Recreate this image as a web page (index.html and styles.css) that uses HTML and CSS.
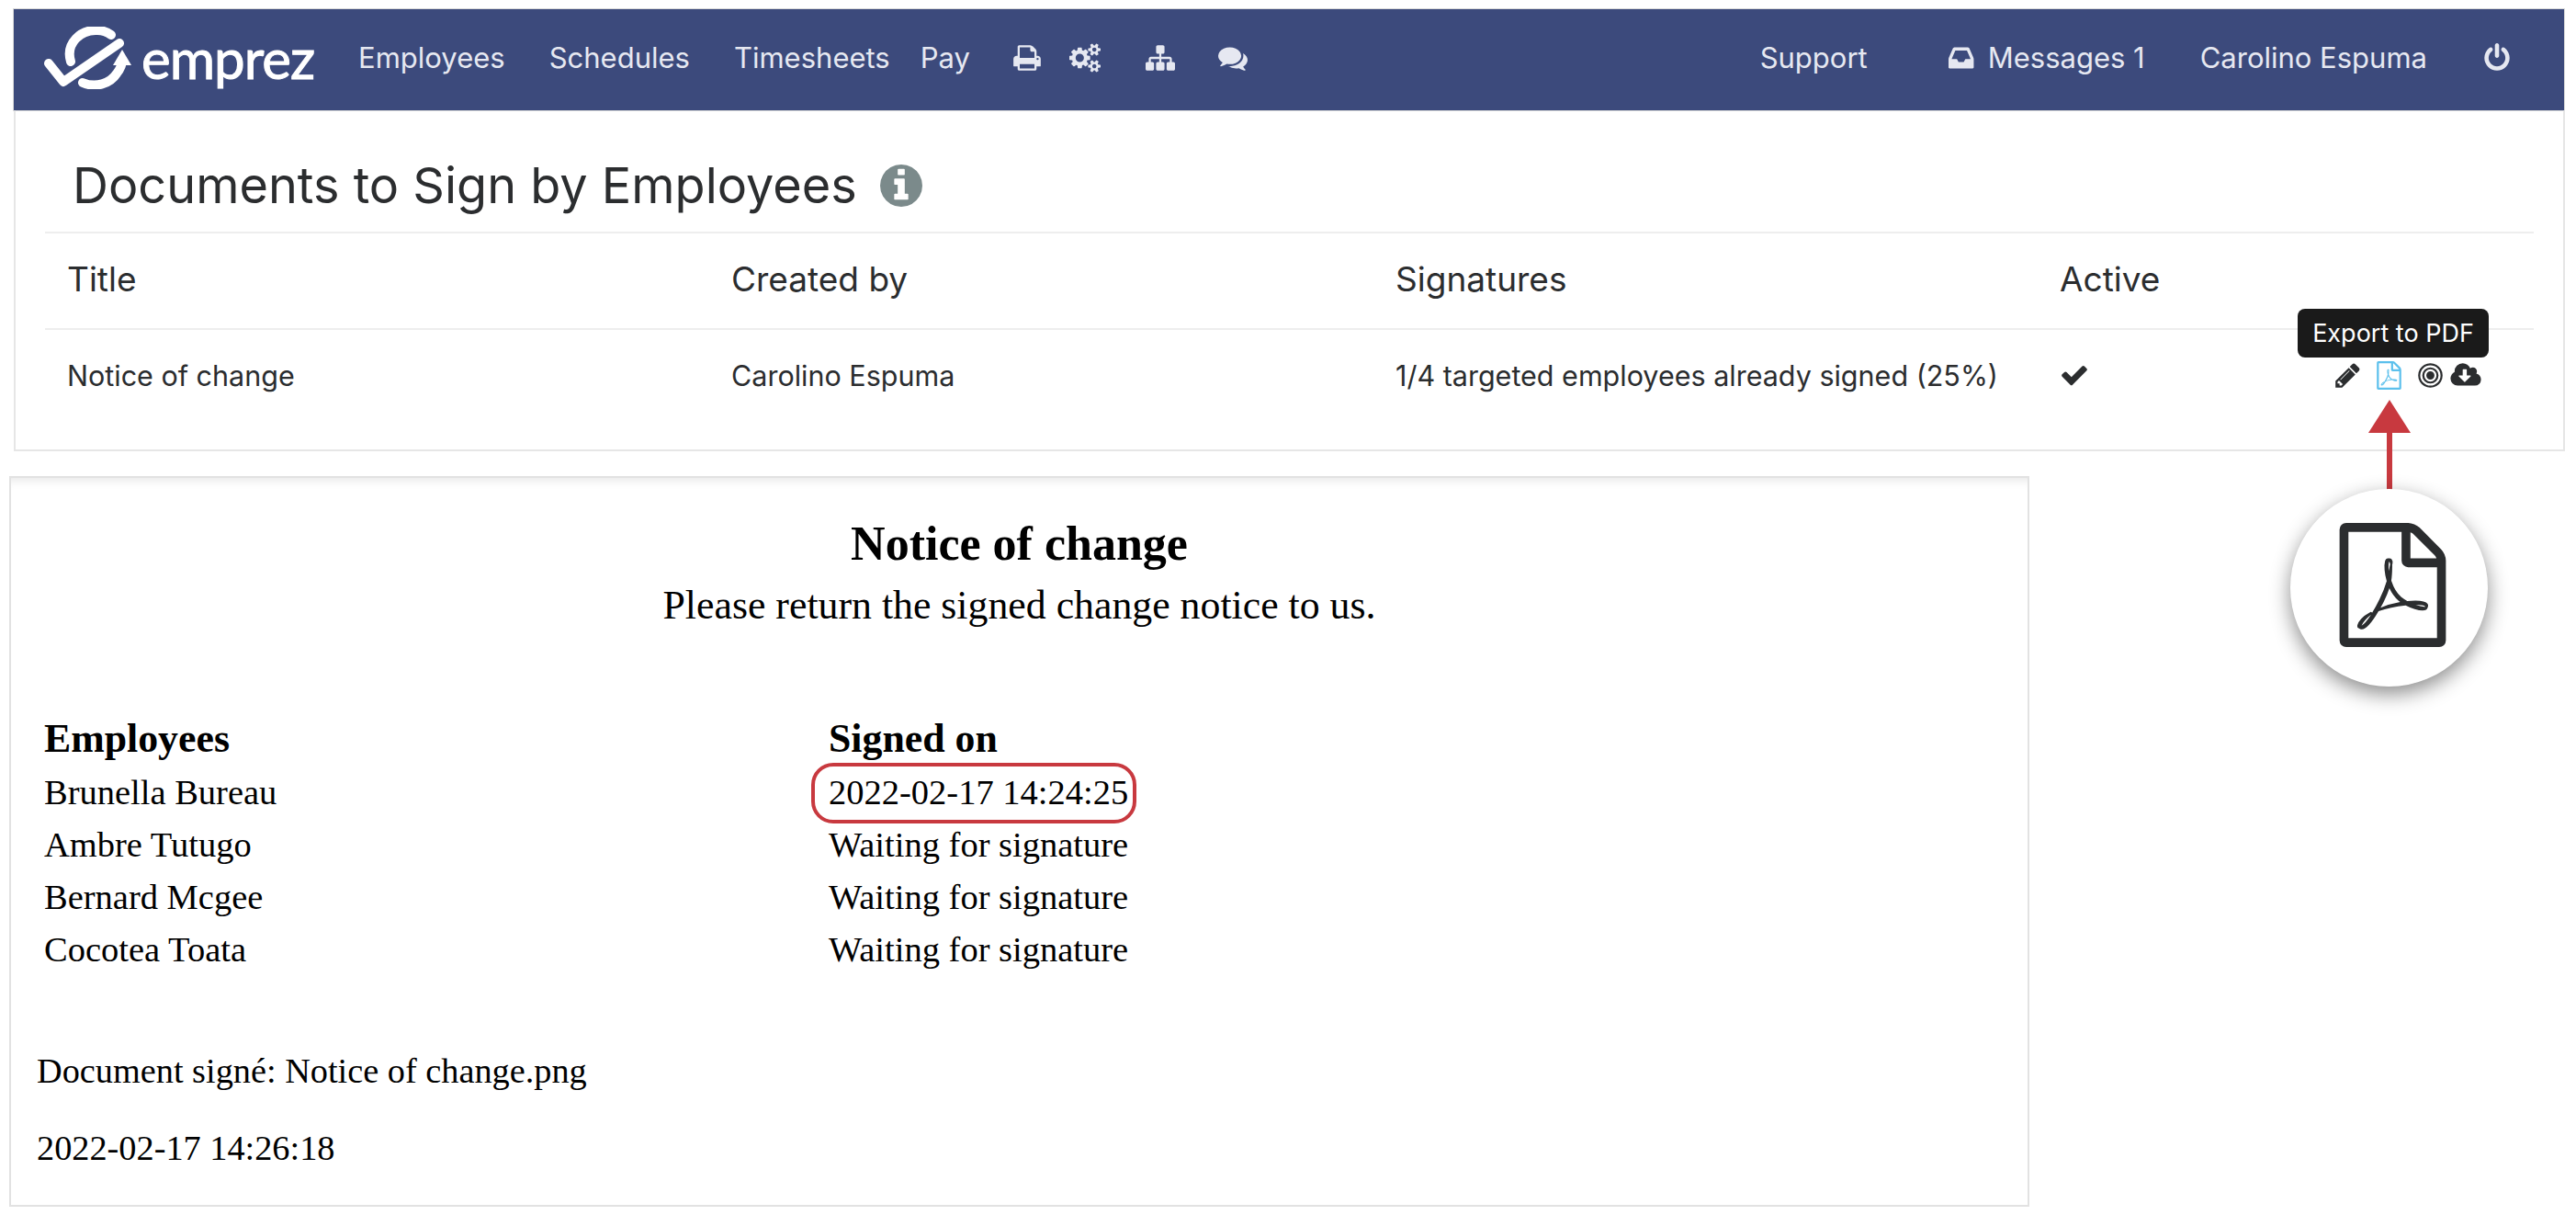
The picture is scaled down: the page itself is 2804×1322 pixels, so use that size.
FILE: index.html
```html
<!DOCTYPE html>
<html>
<head>
  <title>Documents to Sign by Employees</title>
  <meta charset="UTF-8">
  <link rel="stylesheet" href="styles.css">
</head>
<body>
  <div class="page">
    <nav class="navbar">
      <a class="brand">
        <svg class="brand-mark" viewBox="0 0 95 68">
          <path class="mark-line" d="M5 40 L21 60 L82 18"/>
          <path class="mark-line" d="M29 38 C23 18 40 3 58 4 C64 4 69 6 73 9"/>
          <path class="mark-line" d="M42 61 C56 67 72 62 79 51 C83 46 85 42 85 36"/>
          <path class="mark-head" d="M85 25 L95 42 L75 42 Z"/>
        </svg>
        <span class="brand-name">emprez</span>
      </a>
      <ul class="nav-list">
        <li>Employees</li>
        <li>Schedules</li>
        <li>Timesheets</li>
        <li class="nav-pay">Pay</li>
        <li class="nav-print">
          <svg class="icon" viewBox="0 0 1792 1792"><path d="M448 1536h896v-256h-896v256zm0-640h896v-384h-160q-40 0-68-28t-28-68v-160h-640v640zm1152 64q0-26-19-45t-45-19-45 19-19 45 19 45 45 19 45-19 19-45zm128 0v416q0 13-9.5 22.5t-22.5 9.5h-224v160q0 40-28 68t-68 28h-960q-40 0-68-28t-28-68v-160h-224q-13 0-22.5-9.5t-9.5-22.5v-416q0-79 56.5-135.5t135.5-56.5h64v-544q0-40 28-68t68-28h672q40 0 88 20t76 48l152 152q28 28 48 76t20 88v256h64q79 0 135.5 56.5t56.5 135.5z"/></svg>
        </li>
        <li class="nav-cogs">
          <svg class="icon icon-wide" viewBox="0 0 1920 1792"><path d="M896 896q0-106-75-181t-181-75-181 75-75 181 75 181 181 75 181-75 75-181zm768 512q0-52-38-90t-90-38-90 38-38 90q0 53 37.5 90.5t90.5 37.5 90.5-37.5 37.5-90.5zm0-1024q0-52-38-90t-90-38-90 38-38 90q0 53 37.5 90.5t90.5 37.5 90.5-37.5 37.5-90.5zm-384 421v185q0 10-7 19.5t-16 10.5l-155 24q-11 35-32 76 34 48 90 115 7 11 7 20 0 12-7 19-23 30-82.5 89.5t-78.5 59.5q-11 0-21-7l-115-90q-37 19-77 31-11 108-23 155-7 24-30 24h-186q-11 0-20-7.5t-10-17.5l-23-153q-34-10-75-31l-118 89q-7 7-20 7-11 0-21-8-144-133-144-160 0-9 7-19 10-14 41-53t47-61q-23-44-35-82l-152-24q-10-1-17-9.5t-7-19.5v-185q0-10 7-19.5t16-10.5l155-24q11-35 32-76-34-48-90-115-7-11-7-20 0-12 7-20 22-30 82-89t79-59q11 0 21 7l115 90q34-18 77-32 11-108 23-154 7-24 30-24h186q11 0 20 7.5t10 17.5l23 153q34 10 75 31l118-89q8-7 20-7 11 0 21 8 144 133 144 160 0 8-7 19-12 16-42 54t-45 60q23 48 34 82l152 23q10 2 17 10.5t7 19.5zm640 533v140q0 16-149 31-12 27-30 52 51 113 51 138 0 4-4 7-122 71-124 71-8 0-46-47t-52-68q-20 2-30 2t-30-2q-14 21-52 68t-46 47q-2 0-124-71-4-3-4-7 0-25 51-138-18-25-30-52-149-15-149-31v-140q0-16 149-31 13-29 30-52-51-113-51-138 0-4 4-7 4-2 35-20t59-34 30-16q8 0 46 46.5t52 67.5q20-2 30-2t30 2q51-71 92-112l6-2q4 0 124 70 4 3 4 7 0 25-51 138 17 23 30 52 149 15 149 31zm0-1024v140q0 16-149 31-12 27-30 52 51 113 51 138 0 4-4 7-122 71-124 71-8 0-46-47t-52-68q-20 2-30 2t-30-2q-14 21-52 68t-46 47q-2 0-124-71-4-3-4-7 0-25 51-138-18-25-30-52-149-15-149-31v-140q0-16 149-31 13-29 30-52-51-113-51-138 0-4 4-7 4-2 35-20t59-34 30-16q8 0 46 46.5t52 67.5q20-2 30-2t30 2q51-71 92-112l6-2q4 0 124 70 4 3 4 7 0 25-51 138 17 23 30 52 149 15 149 31z"/></svg>
        </li>
        <li class="nav-sitemap">
          <svg class="icon" viewBox="0 0 1792 1792"><path d="M1792 1248v320q0 40-28 68t-68 28h-320q-40 0-68-28t-28-68v-320q0-40 28-68t68-28h96v-192h-512v192h96q40 0 68 28t28 68v320q0 40-28 68t-68 28h-320q-40 0-68-28t-28-68v-320q0-40 28-68t68-28h96v-192h-512v192h96q40 0 68 28t28 68v320q0 40-28 68t-68 28h-320q-40 0-68-28t-28-68v-320q0-40 28-68t68-28h96v-192q0-52 38-90t90-38h512v-192h-96q-40 0-68-28t-28-68v-320q0-40 28-68t68-28h320q40 0 68 28t28 68v320q0 40-28 68t-68 28h-96v192h512q52 0 90 38t38 90v192h96q40 0 68 28t28 68z"/></svg>
        </li>
        <li class="nav-comments">
          <svg class="icon" viewBox="0 0 1792 1792"><path d="M1408 768q0 139-94 257t-256.5 186.5-353.5 68.5q-86 0-176-16-124 88-278 128-36 9-86 16h-3q-11 0-20.5-8t-11.5-21q-1-3-1-6.5t.5-6.5 2-6l2.5-5 3.5-5.5 4-5 4.5-5 4-4.5q5-6 23-25t26-29.5 22.5-29 25-38.5 20.5-44q-124-72-195-177t-71-224q0-139 94-257t256.5-186.5 353.5-68.5 353.5 68.5 256.5 186.5 94 257zm384 256q0 120-71 224.5t-195 176.5q10 24 20.5 44t25 38.5 22.5 29 26 29.5 23 25q1 1 4 4.5t4.5 5 4 5 3.5 5.5l2.5 5 2 6 .5 6.5-1 6.5q-3 14-13 22t-22 7q-50-7-86-16-154-40-278-128-90 16-176 16-271 0-472-132 58 4 88 4 161 0 309-45t264-129q125-92 192-212t67-254q0-77-23-152 129 71 204 178t75 230z"/></svg>
        </li>
      </ul>
      <ul class="nav-list nav-right">
        <li>Support</li>
        <li class="nav-messages">
          <svg class="icon" viewBox="0 0 1792 1792"><path d="M1023 960h316q-1-3-2.5-8.5t-2.5-7.5l-212-496h-708l-212 496q-1 3-2.5 8.5t-2.5 7.5h316l95 192h320zm513 30v482q0 26-19 45t-45 19h-1408q-26 0-45-19t-19-45v-482q0-62 25-123l238-552q10-25 36.5-42t52.5-17h832q26 0 52.5 17t36.5 42l238 552q25 61 25 123z"/></svg>
          Messages 1
        </li>
        <li class="nav-user">Carolino Espuma</li>
        <li class="nav-power">
          <svg class="icon" viewBox="0 0 1792 1792"><path d="M1664 896q0 156-61 298t-164 245-245 164-298 61-298-61-245-164-164-245-61-298q0-182 80.5-343t226.5-270q43-32 95.5-25t83.5 50q32 42 24.5 94.5t-49.5 84.5q-98 74-151.5 181t-53.5 228q0 104 40.5 198.5t109.5 163.5 163.5 109.5 198.5 40.5 198.5-40.5 163.5-109.5 109.5-163.5 40.5-198.5q0-121-53.5-228t-151.5-181q-42-32-49.5-84.5t24.5-94.5q31-43 84-50t95 25q146 109 226.5 270t80.5 343zm-640-768v640q0 52-38 90t-90 38-90-38-38-90v-640q0-52 38-90t90-38 90 38 38 90z"/></svg>
        </li>
      </ul>
    </nav>

    <section class="panel">
      <h1 class="panel-title">
        Documents to Sign by Employees
        <svg class="info-icon" viewBox="128 128 1536 1536"><path d="M1152 1376v-160q0-14-9-23t-23-9h-96v-512q0-14-9-23t-23-9h-320q-14 0-23 9t-9 23v160q0 14 9 23t23 9h96v320h-96q-14 0-23 9t-9 23v160q0 14 9 23t23 9h448q14 0 23-9t9-23zm-128-896v-160q0-14-9-23t-23-9h-192q-14 0-23 9t-9 23v160q0 14 9 23t23 9h192q14 0 23-9t9-23zm640 416q0 209-103 385.5t-279.5 279.5-385.5 103-385.5-103-279.5-279.5-103-385.5 103-385.5 279.5-279.5 385.5-103 385.5 103 279.5 279.5 103 385.5z"/></svg>
      </h1>
      <div class="doc-table">
        <div class="doc-row doc-head">
          <div>Title</div>
          <div>Created by</div>
          <div>Signatures</div>
          <div>Active</div>
        </div>
        <div class="doc-row">
          <div>Notice of change</div>
          <div>Carolino Espuma</div>
          <div>1/4 targeted employees already signed (25%)</div>
          <div class="doc-active">
            <svg class="check-icon" viewBox="0 0 1792 1792"><path d="M1671 566q0 40-28 68l-724 724-136 136q-28 28-68 28t-68-28l-136-136-362-362q-28-28-28-68t28-68l136-136q28-28 68-28t68 28l294 295 656-657q28-28 68-28t68 28l136 136q28 28 28 68z"/></svg>
            <div class="actions">
              <svg class="action-icon" viewBox="0 0 1792 1792"><path d="M491 1536l91-91-235-235-91 91v107h128v128h107zm523-928q0-22-22-22-10 0-17 7l-542 542q-7 7-7 17 0 22 22 22 10 0 17-7l542-542q7-7 7-17zm-54-192l416 416-832 832h-416v-416zm683 96q0 53-37 90l-166 166-416-416 166-165q36-38 90-38 53 0 91 38l235 234q37 39 37 91z"/></svg>
              <svg class="action-icon action-pdf" viewBox="0 0 1792 1792"><path d="M1596 380q28 28 48 76t20 88v1152q0 40-28 68t-68 28h-1344q-40 0-68-28t-28-68v-1600q0-40 28-68t68-28h896q40 0 88 20t76 48zm-444-244v376h376q-10-29-22-41l-313-313q-12-12-41-22zm384 1528v-1024h-416q-40 0-68-28t-28-68v-416h-768v1536h1280zm-514-593q33 26 84 56 59-7 117-7 147 0 177 49 16 22 2 52 0 1-1 2l-2 2v1q-6 38-71 38-48 0-115-20t-130-53q-221 24-392 83-153 262-242 262-15 0-28-7l-24-12q-1-1-6-5-10-10-6-36 9-40 56-91.5t132-96.5q14-9 23 6 2 2 2 4 52-85 107-197 68-136 104-262-24-82-30.5-159.5t6.5-127.5q11-40 42-40h21q23 0 35 15 18 21 9 68-2 6-4 8 1 3 1 8v30q-2 123-14 192 55 164 146 238zm-576 411q52-24 137-158-51 40-87.5 84t-49.5 74zm398-920q-15 42-2 132 1-7 7-44 0-3 7-43 1-4 4-8-1-1-1-2-1-2-1-3-1-22-13-36 0 1-1 2v2zm-124 661q135-54 284-81-2-1-13-9.5t-16-13.5q-76-67-127-176-27 86-83 197-30 56-45 83zm646-16q-24-24-140-24 76 28 124 28 14 0 18-1 0-1-2-3z"/></svg>
              <svg class="action-icon" viewBox="0 0 1792 1792"><path d="M1152 896q0 106-75 181t-181 75-181-75-75-181 75-181 181-75 181 75 75 181zm128 0q0-159-112.5-271.5t-271.5-112.5-271.5 112.5-112.5 271.5 112.5 271.5 271.5 112.5 271.5-112.5 112.5-271.5zm128 0q0 212-150 362t-362 150-362-150-150-362 150-362 362-150 362 150 150 362zm128 0q0-130-51-248.5t-136.5-204-204-136.5-248.5-51-248.5 51-204 136.5-136.5 204-51 248.5 51 248.5 136.5 204 204 136.5 248.5 51 248.5-51 204-136.5 136.5-204 51-248.5zm128 0q0 209-103 385.5t-279.5 279.5-385.5 103-385.5-103-279.5-279.5-103-385.5 103-385.5 279.5-279.5 385.5-103 385.5 103 279.5 279.5 103 385.5z"/></svg>
              <svg class="action-icon action-cloud" viewBox="0 0 1920 1792"><path d="M1280 928q0-14-9-23t-23-9h-224v-352q0-13-9.5-22.5t-22.5-9.5h-192q-13 0-22.5 9.5t-9.5 22.5v352h-224q-13 0-22.5 9.5t-9.5 22.5q0 14 9 23l352 352q9 9 23 9t23-9l351-351q10-12 10-24zm640 224q0 159-112.5 271.5t-271.5 112.5h-1088q-185 0-316.5-131.5t-131.5-316.5q0-130 70-240t188-165q-2-30-2-43 0-212 150-362t362-150q156 0 285.5 87t188.5 231q71-62 166-62 106 0 181 75t75 181q0 76-41 138 130 31 213.5 135.5t83.5 238.5z"/></svg>
            </div>
          </div>
        </div>
      </div>
    </section>

    <section class="notice">
      <h2 class="notice-title">Notice of change</h2>
      <div class="notice-sub">Please return the signed change notice to us.</div>
      <table class="sign-table">
        <tr><th>Employees</th><th>Signed on</th></tr>
        <tr><td>Brunella Bureau</td><td>2022-02-17 14:24:25</td></tr>
        <tr><td>Ambre Tutugo</td><td>Waiting for signature</td></tr>
        <tr><td>Bernard Mcgee</td><td>Waiting for signature</td></tr>
        <tr><td>Cocotea Toata</td><td>Waiting for signature</td></tr>
      </table>
      <p class="notice-line">Document signé: Notice of change.png</p>
      <p class="notice-line">2022-02-17 14:26:18</p>
    </section>

    <!-- annotations over the screenshot -->
    <div class="tooltip">Export to PDF</div>
    <div class="arrow-head"></div>
    <div class="arrow-line"></div>
    <div class="zoom-circle">
      <svg class="zoom-icon" viewBox="0 0 1792 1792"><path d="M1596 380q28 28 48 76t20 88v1152q0 40-28 68t-68 28h-1344q-40 0-68-28t-28-68v-1600q0-40 28-68t68-28h896q40 0 88 20t76 48zm-444-244v376h376q-10-29-22-41l-313-313q-12-12-41-22zm384 1528v-1024h-416q-40 0-68-28t-28-68v-416h-768v1536h1280zm-514-593q33 26 84 56 59-7 117-7 147 0 177 49 16 22 2 52 0 1-1 2l-2 2v1q-6 38-71 38-48 0-115-20t-130-53q-221 24-392 83-153 262-242 262-15 0-28-7l-24-12q-1-1-6-5-10-10-6-36 9-40 56-91.5t132-96.5q14-9 23 6 2 2 2 4 52-85 107-197 68-136 104-262-24-82-30.5-159.5t6.5-127.5q11-40 42-40h21q23 0 35 15 18 21 9 68-2 6-4 8 1 3 1 8v30q-2 123-14 192 55 164 146 238zm-576 411q52-24 137-158-51 40-87.5 84t-49.5 74zm398-920q-15 42-2 132 1-7 7-44 0-3 7-43 1-4 4-8-1-1-1-2-1-2-1-3-1-22-13-36 0 1-1 2v2zm-124 661q135-54 284-81-2-1-13-9.5t-16-13.5q-76-67-127-176-27 86-83 197-30 56-45 83zm646-16q-24-24-140-24 76 28 124 28 14 0 18-1 0-1-2-3z"/></svg>
    </div>
    <div class="red-outline"></div>
  </div>
</body>
</html>
```

FILE: styles.css
```css
/* Reset styles */
* {
  margin: 0;
  padding: 0;
  box-sizing: border-box;
}

body {
  font-family: 'Inter', sans-serif;
  background-color: #fff;
  color: #2b2d2f;
}

.page {
  position: relative;
  width: 2804px;
  height: 1322px;
  padding-top: 10px;
  overflow: hidden;
}

/* Navbar */
.navbar {
  display: flex;
  align-items: center;
  height: 110px;
  margin: 0 13px 0 15px;
  padding: 0 57px 5px 33px;
  background-color: #3c4a7c;
  box-shadow: 0 0 0 1px #d9d9d9;
  color: #e6e8f1;
  font-size: 31px;
}

.brand {
  display: flex;
  align-items: center;
  gap: 11px;
  color: #fff;
}

.brand-mark {
  width: 95px;
  height: 68px;
}

.mark-line {
  fill: none;
  stroke: #fff;
  stroke-width: 10;
  stroke-linejoin: round;
  stroke-linecap: round;
}

.mark-head {
  fill: #fff;
}

.brand-name {
  font-family: 'Lato', sans-serif;
  font-size: 60px;
  font-weight: 400;
  letter-spacing: -1px;
  line-height: 1;
  -webkit-text-stroke: 1px #fff;
}

.nav-list {
  display: flex;
  align-items: center;
  list-style: none;
}

.nav-list li {
  margin-left: 48px;
}

.nav-list .nav-pay {
  margin-left: 33px;
}

.nav-list .nav-print {
  margin-left: 46px;
}

.nav-list .nav-cogs {
  margin-left: 30px;
}

.nav-list .nav-sitemap {
  margin-left: 49px;
}

.nav-list .nav-comments {
  margin-left: 47px;
}

.nav-right {
  margin-left: auto;
}

.nav-list .nav-messages {
  display: flex;
  align-items: center;
  gap: 11px;
  margin-left: 88px;
}

.nav-list .nav-user,
.nav-list .nav-power {
  margin-left: 60px;
}

.icon {
  display: block;
  width: 32px;
  height: 32px;
  fill: currentColor;
}

.icon-wide {
  width: 34px;
}

/* Top panel */
.panel {
  height: 371px;
  margin: 0 12px 0 15px;
  padding: 0 32px;
  border: 2px solid #e6e6e6;
  border-top: none;
}

.panel-title {
  display: flex;
  align-items: center;
  gap: 25px;
  height: 134px;
  padding: 31px 0 0 30px;
  font-size: 54px;
  font-weight: 400;
  border-bottom: 2px solid #eee;
}

.info-icon {
  width: 46px;
  height: 46px;
  fill: #7b8a8b;
}

.doc-row {
  display: grid;
  grid-template-columns: 723px 723px 723px 1fr;
  align-items: center;
  height: 98px;
  padding-left: 24px;
  font-size: 30.5px;
}

.doc-head {
  height: 105px;
  padding-bottom: 5px;
  font-size: 37px;
  border-bottom: 2px solid #eee;
}

.doc-active {
  display: flex;
  align-items: center;
  justify-content: space-between;
  padding-right: 57px;
}

.check-icon {
  width: 32px;
  height: 32px;
  fill: #2b2d2f;
}

.actions {
  display: flex;
  align-items: center;
  gap: 14px;
}

.action-icon {
  width: 31px;
  height: 31px;
  fill: #2b2d2f;
}

.action-pdf {
  fill: #5cc0ec;
}

.action-cloud {
  width: 34px;
  margin-left: -8px;
}

/* Notice document */
.notice {
  width: 2199px;
  height: 795px;
  margin: 27px 0 0 10px;
  padding-top: 42px;
  border: 2px solid #e2e2e2;
  box-shadow: inset 0 12px 12px -10px #e4e4e4;
  font-family: 'Liberation Serif', serif;
  color: #000;
}

.notice-title {
  font-size: 52px;
  font-weight: 700;
  line-height: 60px;
  text-align: center;
}

.notice-sub {
  font-size: 43.8px;
  line-height: 50px;
  margin-top: 11px;
  text-align: center;
}

.sign-table {
  border-collapse: collapse;
  margin: 90px 0 0 36px;
  font-size: 38.5px;
}

.sign-table th {
  font-size: 43.8px;
  font-weight: 700;
  text-align: left;
  height: 60px;
}

.sign-table td {
  height: 57px;
}

.sign-table th:first-child,
.sign-table td:first-child {
  width: 854px;
}

.notice-line {
  margin-left: 28px;
  font-size: 38.3px;
  line-height: 48px;
}

.notice-line:first-of-type {
  margin-top: 80px;
  margin-bottom: 36px;
}

/* Annotations */
.tooltip {
  position: absolute;
  left: 2501px;
  top: 336px;
  width: 208px;
  height: 53px;
  border-radius: 8px;
  background-color: #1a1a1a;
  color: #fff;
  font-size: 27px;
  line-height: 53px;
  text-align: center;
}

.arrow-head {
  position: absolute;
  left: 2578px;
  top: 435px;
  width: 46px;
  height: 36px;
  background-color: #c8393f;
  clip-path: polygon(50% 0, 100% 100%, 0 100%);
}

.arrow-line {
  position: absolute;
  left: 2598px;
  top: 471px;
  width: 6px;
  height: 62px;
  background-color: #c8393f;
}

.zoom-circle {
  position: absolute;
  left: 2493px;
  top: 532px;
  display: flex;
  align-items: center;
  justify-content: center;
  width: 215px;
  height: 215px;
  padding: 0 0 6px 8px;
  border-radius: 50%;
  background-color: #fff;
  box-shadow: 0 8px 22px rgba(0, 0, 0, 0.45);
}

.zoom-icon {
  width: 135px;
  height: 135px;
  fill: #2b2d2f;
}

.red-outline {
  position: absolute;
  left: 883px;
  top: 830px;
  width: 354px;
  height: 66px;
  border: 4px solid #c8393f;
  border-radius: 24px;
}
```
